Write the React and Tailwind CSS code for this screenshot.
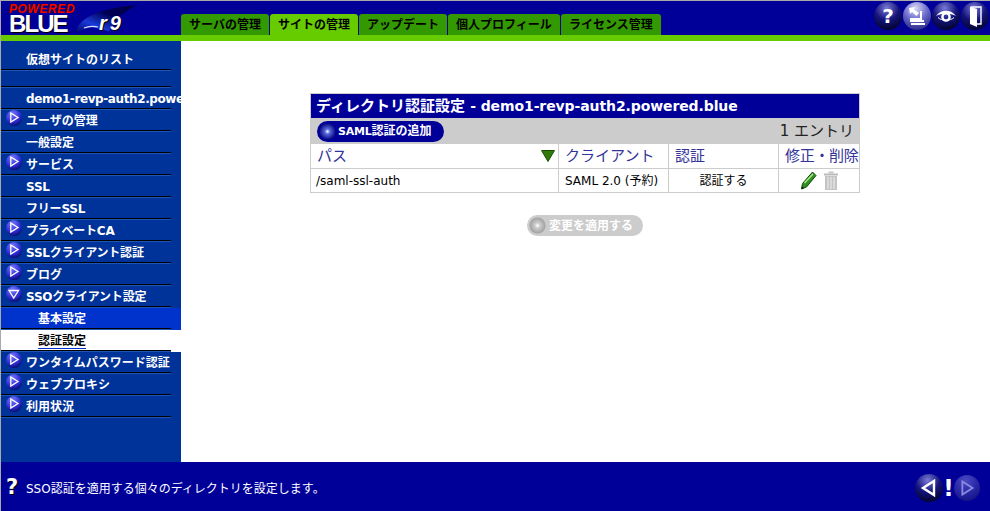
import React from 'react';

const FONT = "font-['DejaVu_Sans','Noto_Sans_CJK_JP',sans-serif]";

const tabs = [
  { label: 'サーバの管理', width: 'w-[88px]' },
  { label: 'サイトの管理', width: 'w-[88px]', active: true },
  { label: 'アップデート', width: 'w-[88px]' },
  { label: '個人プロフィール', width: 'w-[112px]' },
  { label: 'ライセンス管理', width: 'w-[100px]' },
];

const menu = [
  { label: 'ユーザの管理', arrow: 'right' },
  { label: '一般設定' },
  { label: 'サービス', arrow: 'right' },
  { label: 'SSL', latin: true },
  { label: 'フリーSSL', latin: true },
  { label: 'プライベートCA', arrow: 'right', latin: true },
  { label: 'SSLクライアント認証', arrow: 'right', latin: true },
  { label: 'ブログ', arrow: 'right' },
  { label: 'SSOクライアント設定', arrow: 'down', latin: true },
  { label: '基本設定', sub: true },
  { label: '認証設定', sub: true, current: true },
  { label: 'ワンタイムパスワード認証', arrow: 'right' },
  { label: 'ウェブプロキシ', arrow: 'right' },
  { label: '利用状況', arrow: 'right' },
];

const Ball = ({ id, size = 28, light = false, dim = false, children }) => (
  <svg width={size} height={size} viewBox="0 0 28 28" className="shrink-0">
    <defs>
      <radialGradient id={id} cx="0.45" cy="0.22" r="0.85">
        <stop offset="0" stopColor={light ? '#d8d8f4' : dim ? '#4a4ac4' : '#7a7ad8'} />
        <stop offset="0.5" stopColor={light ? '#6a6acc' : dim ? '#2a2aa8' : '#14147c'} />
        <stop offset="1" stopColor={light ? '#20207c' : dim ? '#101080' : '#00001e'} />
      </radialGradient>
    </defs>
    <circle cx="14" cy="14" r="14" fill={`url(#${id})`} />
    {children}
  </svg>
);

const MenuArrow = ({ dir, id }) => (
  <svg width="16" height="16" viewBox="0 0 16 16" className="shrink-0">
    <defs>
      <radialGradient id={id} cx="0.4" cy="0.25" r="0.85">
        <stop offset="0" stopColor="#7a7aff" />
        <stop offset="0.6" stopColor="#2a2ad0" />
        <stop offset="1" stopColor="#00004a" />
      </radialGradient>
    </defs>
    <circle cx="8" cy="8" r="8" fill={`url(#${id})`} />
    {dir === 'right' ? (
      <path d="M4.8 3 L12 7.5 L4.8 12 Z" fill="none" stroke="#fff" strokeWidth="1.3" />
    ) : (
      <path d="M3 4.5 L12.5 4.5 L7.75 12 Z" fill="none" stroke="#fff" strokeWidth="1.3" />
    )}
  </svg>
);

const Logo = () => (
  <div className="relative w-[145px] h-[34px] shrink-0">
    <svg width="66" height="32" viewBox="0 0 66 32" className="absolute left-[72px] top-[2px]">
      <defs>
        <linearGradient id="swoosh" x1="0" y1="1" x2="1" y2="0">
          <stop offset="0" stopColor="#000066" />
          <stop offset="0.3" stopColor="#1a3ad8" />
          <stop offset="0.6" stopColor="#000055" />
          <stop offset="1" stopColor="#000044" />
        </linearGradient>
      </defs>
      <path d="M2 30 C6 16 22 6 64 2 C52 8 42 16 36 28 L18 24 C12 26 6 28 2 30 Z" fill="url(#swoosh)" />
      <path d="M11 25 C16 23 20 23 25 24" stroke="#d8e0ff" strokeWidth="1.2" fill="none" />
    </svg>
    <span className="absolute left-[8px] top-[2px] font-['Liberation_Sans',sans-serif] text-[12px] leading-[12px] font-bold italic tracking-[0.6px] text-[#ff0000] [text-shadow:1px_0_0_#000]">POWERED</span>
    <span className="absolute left-[8px] top-[14px] font-['Liberation_Sans',sans-serif] text-[24px] leading-[18px] font-black tracking-[-1.9px] text-white [text-shadow:1px_1px_0_#000]">BLUE</span>
    <span className="absolute left-[98px] top-[12px] font-['Liberation_Sans',sans-serif] text-[20px] leading-[20px] font-bold italic text-white tracking-[3px] [text-shadow:1px_1px_0_#000]">r9</span>
  </div>
);

const Header = () => (
  <div className="h-[40px] shrink-0 flex flex-col">
    <div className="h-[34px] bg-[#000099] flex">
      <Logo />
      <div className="ml-[35px] flex items-end gap-[1px]">
        {tabs.map((t) => (
          <div
            key={t.label}
            className={`${t.width} h-[21px] rounded-t-[3px] flex items-center justify-center text-[12px] font-bold text-black ${t.active ? 'bg-[#66cc00]' : 'bg-[#339900]'}`}
          >
            {t.label}
          </div>
        ))}
      </div>
      <div className="ml-auto mr-[1px] mt-[1px] flex gap-[1px]">
        <Ball id="b1">
          <text x="14" y="21" textAnchor="middle" fontSize="20" fontWeight="bold" fontFamily="'DejaVu Sans'" fill="#fff">?</text>
        </Ball>
        <Ball id="b2" light>
          <path d="M6 6 L12 5 L11 7.5 L16 11 L13.5 14 L9 10 L7 12 Z" fill="#fff" />
          <path d="M18 9 V17 H8 V19 H21 M8 22 H22" fill="none" stroke="#fff" strokeWidth="2" />
        </Ball>
        <Ball id="b3">
          <path d="M4 14 C9 7 19 7 24 14 C19 10.5 9 10.5 4 14 Z" fill="#fff" />
          <circle cx="14" cy="15" r="3.6" fill="none" stroke="#fff" strokeWidth="2.4" />
          <path d="M6 15.5 C9 19 19 19 22 15.5" fill="none" stroke="#fff" strokeWidth="1" />
        </Ball>
        <Ball id="b4">
          <path d="M10 5 H20 V22 H16" fill="none" stroke="#fff" strokeWidth="1.4" />
          <path d="M9 4.5 L16 7 V25 L9 22 Z" fill="#fff" />
        </Ball>
      </div>
    </div>
    <div className="h-[6px] bg-[#66cc00]" />
  </div>
);

const RowLine = () => (
  <div className="absolute left-0 bottom-0 w-[170px] h-[2px] border-t border-b border-t-black border-b-[#1f55b5]" />
);

const MenuRow = ({ item, index }) => (
  <div
    className={`h-[22px] flex items-center relative font-bold text-[12px] whitespace-nowrap ${
      item.current ? 'bg-white text-black' : item.sub ? 'bg-[#0033cc] text-white' : 'text-white'
    }`}
  >
    {item.arrow && (
      <div className="absolute left-[5px] top-[0px]">
        <MenuArrow dir={item.arrow} id={`m${index}`} />
      </div>
    )}
    <span className={`${item.sub ? 'ml-[37px]' : 'ml-[25px]'} ${item.latin ? 'tracking-[-0.2px]' : ''} ${item.current ? 'border-b border-[#0033cc] leading-[14px]' : ''}`}>
      {item.label}
    </span>
    <RowLine />
  </div>
);

const Sidebar = () => (
  <div className="w-[180px] shrink-0 bg-[#003399] overflow-hidden">
    <div className="h-[30px] flex items-end pb-[2px] relative text-white font-bold text-[12px] pl-[25px]">
      <span>仮想サイトのリスト</span>
      <RowLine />
    </div>
    <div className="h-[17px] relative">
      <RowLine />
    </div>
    <div className="h-[22px] flex items-center relative text-white font-bold text-[12px] tracking-[-0.4px] pl-[25px] whitespace-nowrap">
      demo1-revp-auth2.powered.blue
      <RowLine />
    </div>
    {menu.map((item, i) => (
      <MenuRow key={item.label} item={item} index={i} />
    ))}
  </div>
);

const Pencil = () => (
  <svg width="17" height="19" viewBox="0 0 17 19">
    <path d="M12.5 1 L16 4.5 L6.5 16 L1.5 18 L2.5 12.5 Z" fill="#2f8f1f" stroke="#0f4f0f" strokeWidth="1" />
    <path d="M4.5 12 L13 3" stroke="#a8e88a" strokeWidth="1.5" />
    <path d="M2 15.5 L1.5 18 L4 17" fill="#111" />
  </svg>
);

const Trash = () => (
  <svg width="16" height="20" viewBox="0 0 16 20">
    <rect x="1" y="2.5" width="14" height="2" fill="#bbb" />
    <rect x="5.5" y="0.5" width="5" height="2" fill="#c8c8c8" />
    <rect x="2" y="5" width="12" height="14" fill="#c4c4c4" />
    <path d="M5 6 V18 M8 6 V18 M11 6 V18" stroke="#f0f0f0" strokeWidth="1" />
  </svg>
);

const SmallBall = ({ id, gray }) => (
  <svg width="17" height="17" viewBox="0 0 17 17" className="shrink-0">
    <defs>
      <radialGradient id={id} cx="0.5" cy="0.5" r="0.55">
        <stop offset="0" stopColor="#ffffff" />
        <stop offset="0.3" stopColor={gray ? '#cccccc' : '#5566dd'} />
        <stop offset="1" stopColor={gray ? '#999999' : '#000077'} />
      </radialGradient>
    </defs>
    <circle cx="8.5" cy="8.5" r="8" fill={`url(#${id})`} />
  </svg>
);

const Table = () => (
  <div className="w-[550px] mr-[1px] border border-[#cccccc] bg-white">
    <div className="h-[24px] bg-[#000099] text-white font-bold text-[15px] leading-[24px] pl-[5px] whitespace-nowrap">
      ディレクトリ認証設定 <span className="text-[14px] tracking-[-0.1px]">- demo1-revp-auth2.powered.blue</span>
    </div>
    <div className="h-[26px] bg-[#cccccc] flex items-center justify-between pl-[6px] pr-[5px]">
      <div className="h-[21px] w-[127px] rounded-full bg-[#000099] flex items-center pl-[2px] gap-[2px] text-white text-[12px] font-bold whitespace-nowrap">
        <SmallBall id="add" />
        <span><span className="text-[11px] tracking-[-0.2px]">SAML</span>認証の追加</span>
      </div>
      <span className="text-[15px] text-[#222222]">1 エントリ</span>
    </div>
    <div className="grid grid-cols-[247px_110px_110px_81px] text-[15px] text-[#333399] h-[24px] leading-[24px]">
      <div className="pl-[6px] pr-[3px] flex items-center justify-between">
        パス
        <svg width="14" height="12" viewBox="0 0 14 12">
          <path d="M0.5 0.5 H13.5 L7 11.5 Z" fill="#2f7a0a" stroke="#1c4f05" />
        </svg>
      </div>
      <div className="border-l border-[#cccccc] pl-[6px]">クライアント</div>
      <div className="border-l border-[#cccccc] pl-[6px]">認証</div>
      <div className="border-l border-[#cccccc] pl-[6px] whitespace-nowrap tracking-[-0.3px]">修正・削除</div>
    </div>
    <div className="grid grid-cols-[247px_110px_110px_81px] text-[12px] text-black h-[24px] border-t border-[#cccccc] items-stretch">
      <div className="pl-[5px] flex items-center">/saml-ssl-auth</div>
      <div className="border-l border-[#cccccc] pl-[6px] flex items-center whitespace-nowrap">SAML 2.0 (予約)</div>
      <div className="border-l border-[#cccccc] flex items-center justify-center">認証する</div>
      <div className="border-l border-[#cccccc] flex items-center justify-center gap-[6px]">
        <Pencil />
        <Trash />
      </div>
    </div>
  </div>
);

const Footer = () => (
  <div className="h-[49px] shrink-0 bg-[#000099] flex items-center">
    <span className="ml-[5px] w-[14px] text-[21px] leading-[24px] font-bold text-white [text-shadow:1px_1px_0_#000]">?</span>
    <span className="ml-[6px] mt-[5px] text-[12px] text-white">SSO認証を適用する個々のディレクトリを設定します。</span>
    <div className="ml-auto mr-[10px] mt-[3px] flex items-center">
      <Ball id="prev" size={28}>
        <path d="M19 7 V21 L8 14 Z" fill="none" stroke="#fff" strokeWidth="2.4" />
      </Ball>
      <span className="w-[11px] text-center text-white font-bold text-[23px] leading-[28px]">!</span>
      <Ball id="next" size={26} dim>
        <path d="M9 7 V21 L20 14 Z" fill="none" stroke="#8888dd" strokeWidth="2" />
      </Ball>
    </div>
  </div>
);

const App = () => {
  return (
    <div className={`w-[990px] h-[511px] overflow-hidden bg-[#aaaaaa] pl-[1px] pt-[1px] ${FONT}`}>
      <div className="w-[989px] h-[510px] flex flex-col bg-white">
        <Header />
        <div className="flex-1 flex min-h-0">
          <Sidebar />
          <div className="flex-1 flex flex-col items-center pt-[52px]">
            <Table />
            <div className="mt-[22px] mr-[1px] h-[21px] w-[116px] rounded-full bg-[#cccccc] flex items-center pl-[2px] gap-[3px] text-white text-[12px] font-bold whitespace-nowrap">
              <SmallBall id="apply" gray />
              変更を適用する
            </div>
          </div>
        </div>
        <Footer />
      </div>
    </div>
  );
};

export default App;
